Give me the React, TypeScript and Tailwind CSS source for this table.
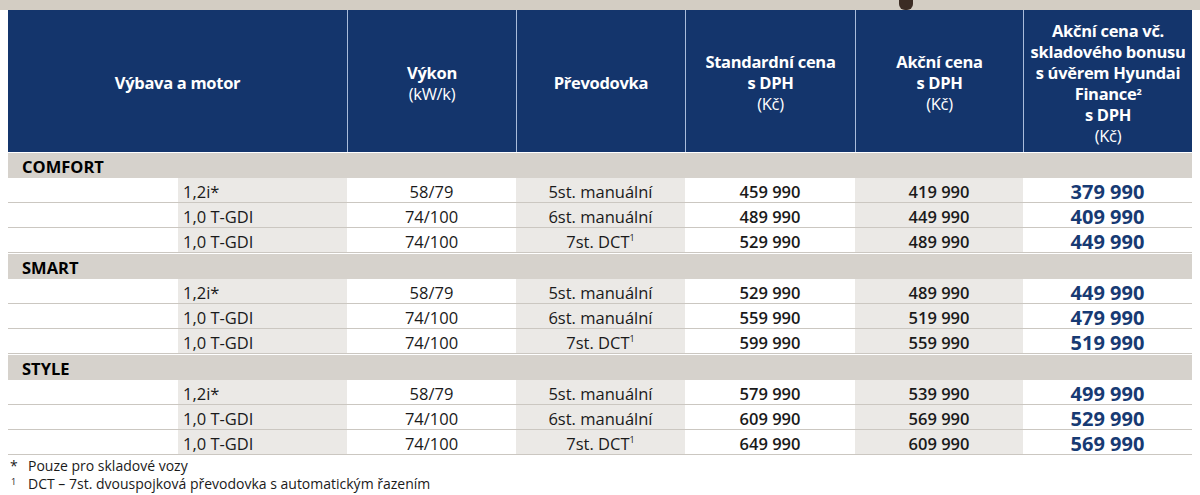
import React from "react";

type Row = { engine: string; power: string; gear: React.ReactNode; std: string; action: string; finance: string };

const DCT = (
  <>
    7st. DCT<sup className="text-[9px] leading-none relative -top-[4px]">1</sup>
  </>
);

const groups: { name: string; rows: Row[] }[] = [
  {
    name: "COMFORT",
    rows: [
      { engine: "1,2i*", power: "58/79", gear: "5st. manuální", std: "459 990", action: "419 990", finance: "379 990" },
      { engine: "1,0 T-GDI", power: "74/100", gear: "6st. manuální", std: "489 990", action: "449 990", finance: "409 990" },
      { engine: "1,0 T-GDI", power: "74/100", gear: DCT, std: "529 990", action: "489 990", finance: "449 990" },
    ],
  },
  {
    name: "SMART",
    rows: [
      { engine: "1,2i*", power: "58/79", gear: "5st. manuální", std: "529 990", action: "489 990", finance: "449 990" },
      { engine: "1,0 T-GDI", power: "74/100", gear: "6st. manuální", std: "559 990", action: "519 990", finance: "479 990" },
      { engine: "1,0 T-GDI", power: "74/100", gear: DCT, std: "599 990", action: "559 990", finance: "519 990" },
    ],
  },
  {
    name: "STYLE",
    rows: [
      { engine: "1,2i*", power: "58/79", gear: "5st. manuální", std: "579 990", action: "539 990", finance: "499 990" },
      { engine: "1,0 T-GDI", power: "74/100", gear: "6st. manuální", std: "609 990", action: "569 990", finance: "529 990" },
      { engine: "1,0 T-GDI", power: "74/100", gear: DCT, std: "649 990", action: "609 990", finance: "569 990" },
    ],
  },
];

const cols = "grid grid-cols-[170px_169px_169px_169px_170px_168px_169px]";
const cell = "flex items-center pt-[3px]";

export default function App() {
  return (
    <div className="w-[1200px] h-[495px] bg-white overflow-hidden text-[#1a1a1a]" style={{ fontFamily: "'Open Sans', 'Noto Sans', sans-serif" }}>
      {/* pruh fotky nad tabulkou */}
      <div className="relative h-[10px] bg-[#d3cdc3]">
        <div className="absolute left-[899px] top-0 h-[10px] w-[14px] rounded-b-[6px] bg-[#3b2c24]" />
      </div>

      <div className="mx-[8px] w-[1184px]">
        {/* hlavička */}
        <div className={`${cols} h-[142px] bg-[#14356c] text-white font-bold text-[16.5px] leading-[21px] text-center tracking-[-0.3px]`}>
          <div className="col-span-2 flex items-center justify-center pt-[3px]">Výbava a motor</div>
          <div className="flex flex-col items-center justify-center pt-[3px] border-l border-[#a9bcdb]">
            <span>Výkon</span>
            <span className="font-normal">(kW/k)</span>
          </div>
          <div className="flex items-center justify-center pt-[3px] border-l border-[#a9bcdb]">Převodovka</div>
          <div className="flex flex-col items-center justify-center pt-[3px] border-l border-[#a9bcdb]">
            <span>Standardní cena</span>
            <span>s DPH</span>
            <span className="font-normal">(Kč)</span>
          </div>
          <div className="flex flex-col items-center justify-center pt-[3px] border-l border-[#a9bcdb]">
            <span>Akční cena</span>
            <span>s DPH</span>
            <span className="font-normal">(Kč)</span>
          </div>
          <div className="flex flex-col items-center justify-center pt-[3px] border-l border-[#a9bcdb]">
            <span>Akční cena vč.</span>
            <span>skladového bonusu</span>
            <span>s úvěrem Hyundai</span>
            <span>
              Finance<sup className="text-[9px] leading-none relative -top-[5px]">2</sup>
            </span>
            <span>s DPH</span>
            <span className="font-normal">(Kč)</span>
          </div>
        </div>

        {/* skupiny */}
        {groups.map((g) => (
          <div key={g.name}>
            <div className="h-[25px] bg-[#d6d2cc] mt-[1px] flex items-center pt-[2px] pl-[14px] font-bold text-[16.5px] leading-[23px] text-black">
              {g.name}
            </div>
            {g.rows.map((r, i) => (
              <div key={i} className={`${cols} h-[25px] text-[16.5px] leading-[21px] border-b border-[#cbc7c1]`}>
                <div className="bg-white" />
                <div className={`${cell} bg-[#ebe9e6] pl-[5px]`}>{r.engine}</div>
                <div className={`${cell} bg-white justify-center`}>{r.power}</div>
                <div className={`${cell} bg-[#ebe9e6] justify-center`}>{r.gear}</div>
                <div className={`${cell} bg-white justify-center font-semibold`}>{r.std}</div>
                <div className={`${cell} bg-[#ebe9e6] justify-center font-semibold`}>{r.action}</div>
                <div className={`${cell} bg-white justify-center font-bold text-[20px] leading-[21px] text-[#173a73]`}>
                  {r.finance}
                </div>
              </div>
            ))}
          </div>
        ))}
      </div>

      {/* poznámky */}
      <div className="mt-[2px] text-[14px] leading-[18px] text-[#1a1a1a]">
        <div className="flex">
          <span className="w-[28px] pl-[10px]">*</span>
          <span>Pouze pro skladové vozy</span>
        </div>
        <div className="flex">
          <span className="w-[28px] pl-[11px] text-[9px] leading-[13px]">1</span>
          <span>DCT – 7st. dvouspojková převodovka s automatickým řazením</span>
        </div>
      </div>
    </div>
  );
}
